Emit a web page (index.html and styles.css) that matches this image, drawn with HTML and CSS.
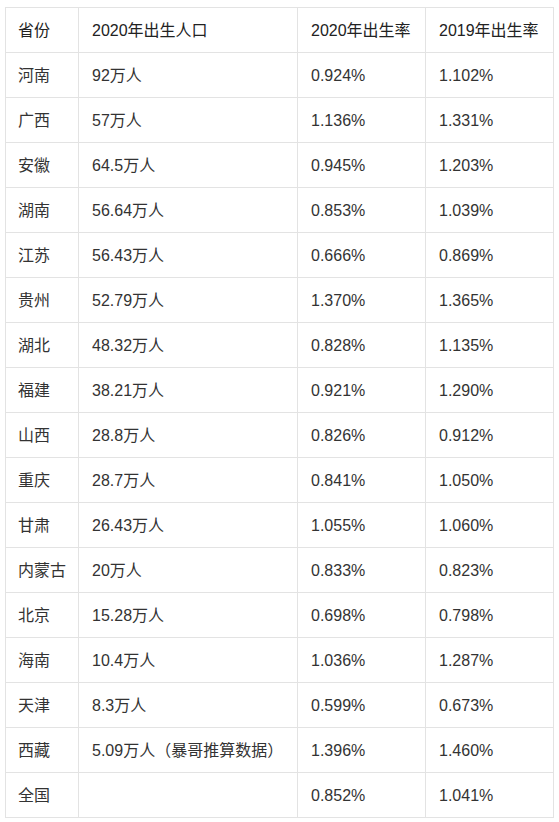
FILE: index.html
```html
<!DOCTYPE html>
<html lang="zh-CN">
<head>
<meta charset="utf-8">
<title>2020年各省出生人口</title>
<link rel="stylesheet" href="styles.css">
</head>
<body>
<table class="data">
  <colgroup>
    <col class="c1"><col class="c2"><col class="c3"><col class="c4">
  </colgroup>
  <thead>
    <tr><th>省份</th><th>2020年出生人口</th><th>2020年出生率</th><th>2019年出生率</th></tr>
  </thead>
  <tbody>
    <tr><td>河南</td><td>92万人</td><td>0.924%</td><td>1.102%</td></tr>
    <tr><td>广西</td><td>57万人</td><td>1.136%</td><td>1.331%</td></tr>
    <tr><td>安徽</td><td>64.5万人</td><td>0.945%</td><td>1.203%</td></tr>
    <tr><td>湖南</td><td>56.64万人</td><td>0.853%</td><td>1.039%</td></tr>
    <tr><td>江苏</td><td>56.43万人</td><td>0.666%</td><td>0.869%</td></tr>
    <tr><td>贵州</td><td>52.79万人</td><td>1.370%</td><td>1.365%</td></tr>
    <tr><td>湖北</td><td>48.32万人</td><td>0.828%</td><td>1.135%</td></tr>
    <tr><td>福建</td><td>38.21万人</td><td>0.921%</td><td>1.290%</td></tr>
    <tr><td>山西</td><td>28.8万人</td><td>0.826%</td><td>0.912%</td></tr>
    <tr><td>重庆</td><td>28.7万人</td><td>0.841%</td><td>1.050%</td></tr>
    <tr><td>甘肃</td><td>26.43万人</td><td>1.055%</td><td>1.060%</td></tr>
    <tr><td>内蒙古</td><td>20万人</td><td>0.833%</td><td>0.823%</td></tr>
    <tr><td>北京</td><td>15.28万人</td><td>0.698%</td><td>0.798%</td></tr>
    <tr><td>海南</td><td>10.4万人</td><td>1.036%</td><td>1.287%</td></tr>
    <tr><td>天津</td><td>8.3万人</td><td>0.599%</td><td>0.673%</td></tr>
    <tr><td>西藏</td><td>5.09万人（暴哥推算数据）</td><td>1.396%</td><td>1.460%</td></tr>
    <tr><td>全国</td><td></td><td>0.852%</td><td>1.041%</td></tr>
  </tbody>
</table>
</body>
</html>
```
FILE: styles.css
```css
html, body {
  margin: 0;
  background: #fff;
}
body {
  padding: 7px 6px 0 5px;
  font-family: "Liberation Sans", "Noto Sans CJK SC", sans-serif;
  font-size: 16px;
  color: #333;
}
.data {
  border-collapse: collapse;
  table-layout: fixed;
  width: 548px;
}
.c1 { width: 73px; }
.c2 { width: 219px; }
.c3 { width: 128px; }
.c4 { width: 128px; }
.data th,
.data td {
  border: 1px solid #e3e3e3;
  height: 45px;
  padding: 1px 12px 0 13px;
  box-sizing: border-box;
  text-align: left;
  vertical-align: middle;
  font-weight: normal;
  white-space: nowrap;
  line-height: 20px;
}
.data th { color: #222; }
.data tr > :first-child { padding-left: 12px; }
```
